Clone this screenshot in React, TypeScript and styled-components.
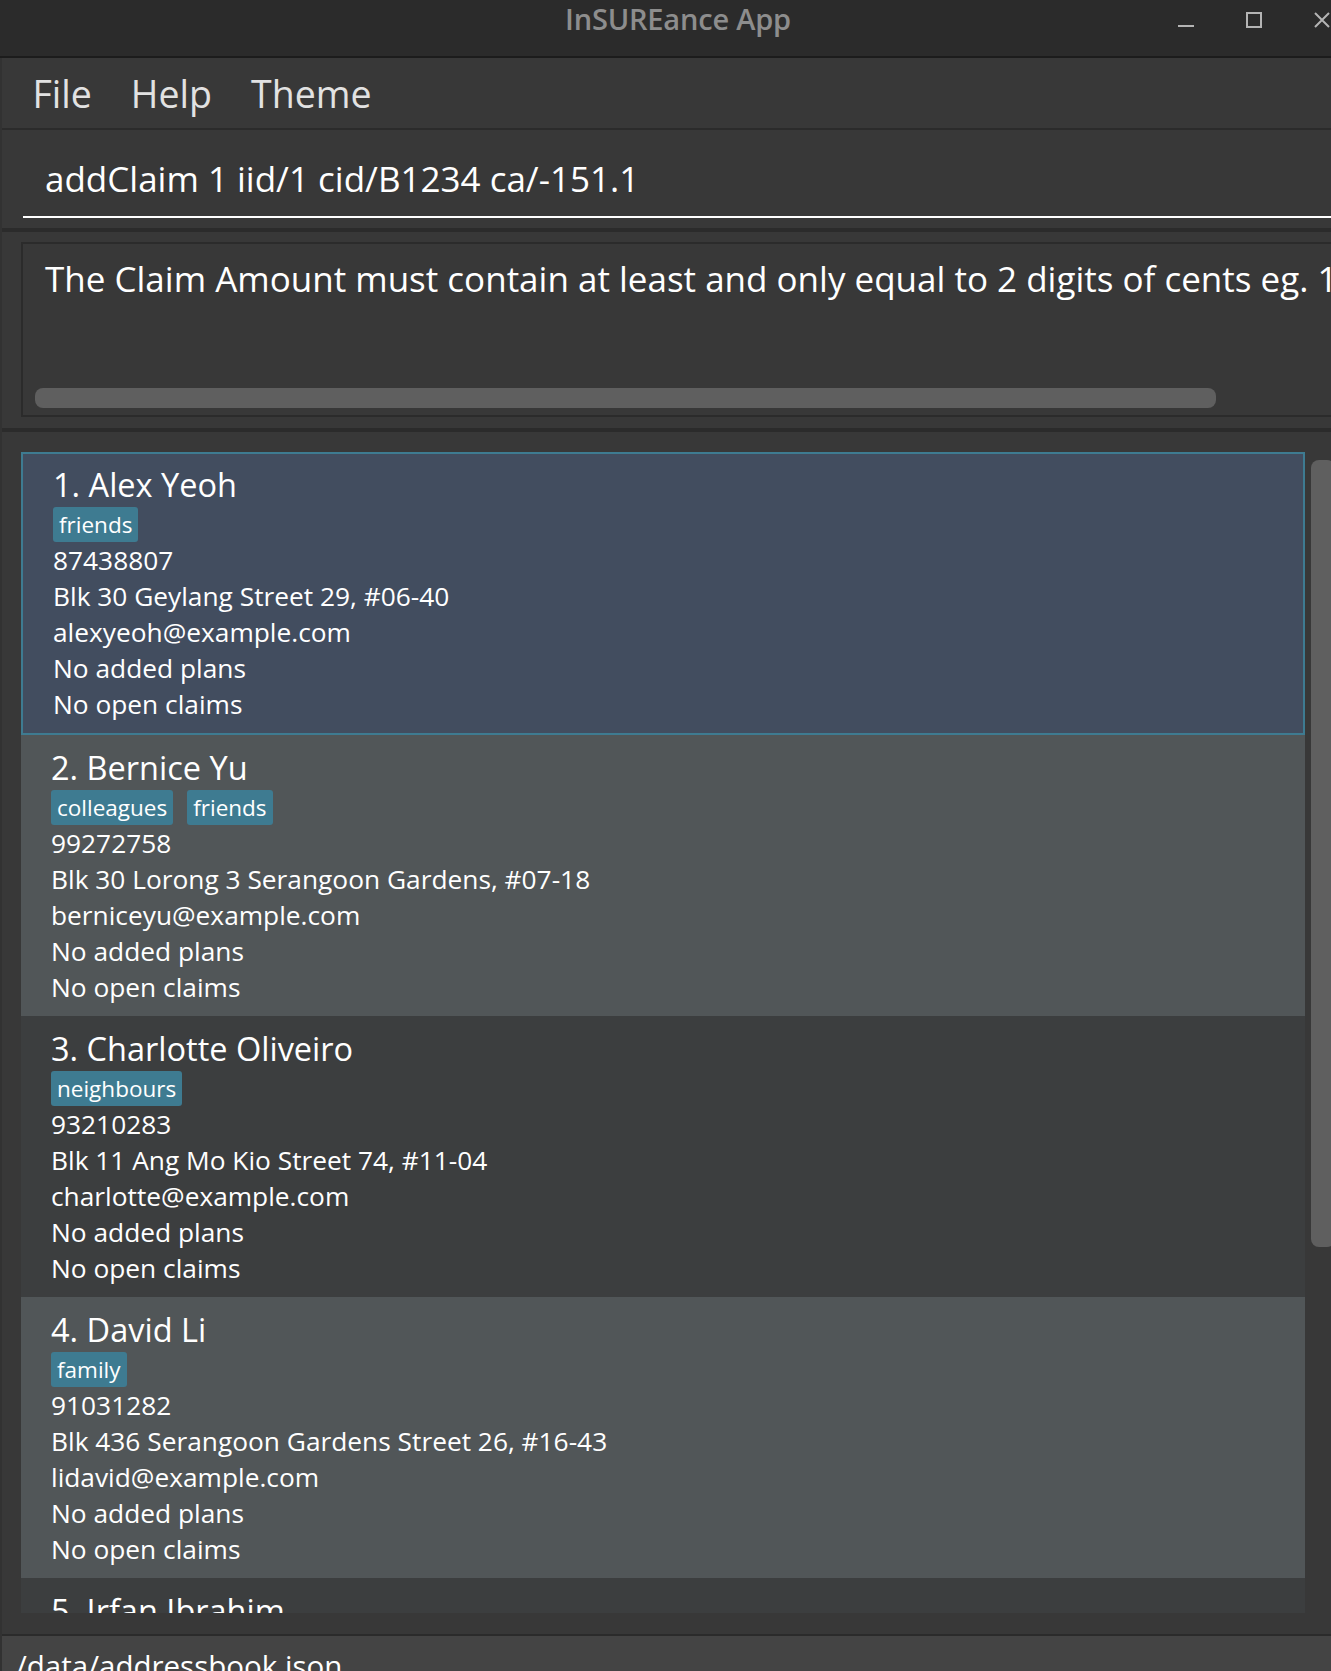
import React from 'react'
import styled, { createGlobalStyle } from 'styled-components'

const GlobalStyle = createGlobalStyle`
  html, body {
    margin: 0;
    padding: 0;
    background: #383838;
    overflow: hidden;
  }
  body {
    font-family: "Open Sans", "Noto Sans", sans-serif;
  }
`

const Window = styled.div`
  width: 1356px;
  height: 1671px;
  display: flex;
  flex-direction: column;
  background: #383838;
  color: #fff;
`
const TitleBar = styled.div`
  height: 56px;
  flex: none;
  display: grid;
  grid-template-columns: 1fr auto 1fr;
  align-items: start;
  background: #2b2b2b;
  border-bottom: 2px solid #1c1c1c;
`
const Title = styled.div`
  grid-column: 2;
  font-size: 29px;
  font-weight: 600;
  line-height: 37px;
  color: #8d8d8d;
  letter-spacing: -0.2px;
`
const Controls = styled.div`
  grid-column: 3;
  justify-self: end;
  display: flex;
`
const ControlButton = styled.div`
  width: 68px;
  height: 40px;
  display: flex;
  align-items: center;
  justify-content: center;
  color: #b4b4b4;
`
const Body = styled.div`
  flex: 1;
  display: flex;
  flex-direction: column;
  min-height: 0;
  border-left: 2px solid #323232;
`
const MenuBar = styled.div`
  height: 70px;
  flex: none;
  display: flex;
  align-items: center;
  padding-left: 11px;
  border-bottom: 2px solid #2b2b2b;
  background: #383838;
`
const MenuItem = styled.span`
  padding: 0 19.5px;
  font-size: 37.5px;
  color: #e2e2e2;
`
const CommandPane = styled.div`
  flex: none;
  padding: 13px 0 10px 21px;
  border-bottom: 4px solid #2b2b2b;
`
const CommandField = styled.div`
  padding: 12px 22px 13px;
  border-bottom: 2px solid #fff;
  font-size: 35px;
  line-height: 48px;
  white-space: nowrap;
`
const ResultPane = styled.div`
  flex: none;
  padding: 10px 0 11px 19px;
  border-bottom: 4px solid #2b2b2b;
`
const ResultBox = styled.div`
  height: 175px;
  box-sizing: border-box;
  display: flex;
  flex-direction: column;
  justify-content: space-between;
  padding: 11px 0 7px 12px;
  border: 2px solid #2b2b2b;
  border-right: none;
  overflow: hidden;
`
const ResultText = styled.div`
  padding-left: 10px;
  font-size: 35px;
  line-height: 48px;
  white-space: nowrap;
`
const HScrollThumb = styled.div`
  width: 1181px;
  height: 20px;
  border-radius: 8px;
  background: #5f5f5f;
`
const ListPane = styled.div`
  flex: 1;
  min-height: 0;
  display: flex;
  padding: 20px 0 21px 19px;
  border-bottom: 2px solid #2b2b2b;
`
const CardList = styled.div`
  width: 1284px;
  flex: none;
  display: flex;
  flex-direction: column;
  overflow: hidden;
`
const ScrollTrack = styled.div`
  flex: none;
  width: 51px;
  box-sizing: border-box;
  padding: 8px 0 0 6px;
`
const VScrollThumb = styled.div`
  width: 24px;
  height: 787px;
  border-radius: 8px;
  background: #5f5f5f;
`
const Card = styled.div<{ $shade: 'selected' | 'even' | 'odd' }>`
  flex: none;
  display: flex;
  flex-direction: column;
  align-items: flex-start;
  padding: ${(p) => (p.$shade === 'selected' ? '11px 30px 11px' : '13px 30px 11px')};
  border: ${(p) => (p.$shade === 'selected' ? '2px solid #3e7b91' : 'none')};
  background: ${(p) =>
    p.$shade === 'selected' ? '#424d5f' : p.$shade === 'even' ? '#515658' : '#3c3e3f'};
`
const Name = styled.div`
  font-size: 32.5px;
  line-height: 40px;
`
const Tags = styled.div`
  display: flex;
  gap: 14px;
  margin: 2px 0 0;
`
const Tag = styled.span`
  font-size: 22.5px;
  line-height: 29px;
  padding: 3px 6px;
  border-radius: 3px;
  background: #3e7b91;
`
const Line = styled.div`
  font-size: 26.3px;
  line-height: 36px;
  white-space: nowrap;
`
const StatusBar = styled.div`
  flex: none;
  height: 35px;
  box-sizing: border-box;
  padding: 10px 0 0 14px;
  background: #444444;
  font-size: 29.5px;
  line-height: 40px;
  overflow: hidden;
  white-space: nowrap;
`

type Person = {
  name: string
  tags: string[]
  phone: string
  address: string
  email: string
}

const people: Person[] = [
  { name: 'Alex Yeoh', tags: ['friends'], phone: '87438807', address: 'Blk 30 Geylang Street 29, #06-40', email: 'alexyeoh@example.com' },
  { name: 'Bernice Yu', tags: ['colleagues', 'friends'], phone: '99272758', address: 'Blk 30 Lorong 3 Serangoon Gardens, #07-18', email: 'berniceyu@example.com' },
  { name: 'Charlotte Oliveiro', tags: ['neighbours'], phone: '93210283', address: 'Blk 11 Ang Mo Kio Street 74, #11-04', email: 'charlotte@example.com' },
  { name: 'David Li', tags: ['family'], phone: '91031282', address: 'Blk 436 Serangoon Gardens Street 26, #16-43', email: 'lidavid@example.com' },
  { name: 'Irfan Ibrahim', tags: ['classmates'], phone: '92492021', address: 'Blk 47 Tampines Street 20, #17-35', email: 'irfan@example.com' },
]

const MinimizeIcon = () => (
  <svg width="16" height="16" viewBox="0 0 16 16">
    <rect x="0" y="13" width="16" height="2" fill="currentColor" />
  </svg>
)
const MaximizeIcon = () => (
  <svg width="16" height="16" viewBox="0 0 16 16">
    <rect x="1" y="1" width="14" height="14" fill="none" stroke="currentColor" strokeWidth="2" />
  </svg>
)
const CloseIcon = () => (
  <svg width="16" height="16" viewBox="0 0 16 16">
    <path d="M1 1 L15 15 M15 1 L1 15" stroke="currentColor" strokeWidth="2" />
  </svg>
)

const PersonCard: React.FC<{ person: Person; index: number }> = ({ person, index }) => {
  const shade = index === 0 ? 'selected' : index % 2 === 1 ? 'even' : 'odd'
  return (
    <Card $shade={shade}>
      <Name>{index + 1}. {person.name}</Name>
      <Tags>
        {person.tags.map((t) => (
          <Tag key={t}>{t}</Tag>
        ))}
      </Tags>
      <Line>{person.phone}</Line>
      <Line>{person.address}</Line>
      <Line>{person.email}</Line>
      <Line>No added plans</Line>
      <Line>No open claims</Line>
    </Card>
  )
}

export default function App() {
  return (
    <>
      <GlobalStyle />
      <Window>
        <TitleBar>
          <Title>InSUREance App</Title>
          <Controls>
            <ControlButton><MinimizeIcon /></ControlButton>
            <ControlButton><MaximizeIcon /></ControlButton>
            <ControlButton><CloseIcon /></ControlButton>
          </Controls>
        </TitleBar>
        <Body>
          <MenuBar>
            <MenuItem>File</MenuItem>
            <MenuItem>Help</MenuItem>
            <MenuItem>Theme</MenuItem>
          </MenuBar>
          <CommandPane>
            <CommandField>addClaim 1 iid/1 cid/B1234 ca/-151.1</CommandField>
          </CommandPane>
          <ResultPane>
            <ResultBox>
              <ResultText>
                The Claim Amount must contain at least and only equal to 2 digits of cents eg. 100.00
              </ResultText>
              <HScrollThumb />
            </ResultBox>
          </ResultPane>
          <ListPane>
            <CardList>
              {people.map((p, i) => (
                <PersonCard key={p.name} person={p} index={i} />
              ))}
            </CardList>
            <ScrollTrack>
              <VScrollThumb />
            </ScrollTrack>
          </ListPane>
          <StatusBar>/data/addressbook.json</StatusBar>
        </Body>
      </Window>
    </>
  )
}
